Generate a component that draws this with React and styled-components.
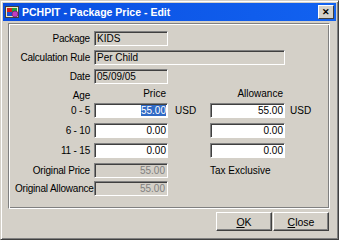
import React from "react";
import styled, { createGlobalStyle } from "styled-components";

const GlobalStyle = createGlobalStyle`
    html, body {
        margin: 0;
        padding: 0;
        background: #d4d0c8;
    }
    body {
        font-family: "Liberation Sans", Arial, sans-serif;
        font-size: 10px;
        color: #000000;
    }
`;

const rows = [
    { age: "0 - 5", price: "55.00", allowance: "55.00", selected: true, currency: true },
    { age: "6 - 10", price: "0.00", allowance: "0.00" },
    { age: "11 - 15", price: "0.00", allowance: "0.00" },
];

export default function App() {
    return (
        <>
            <GlobalStyle />
            <Window>
                <TitleBar>
                    <AppIcon />
                    <Title>PCHPIT - Package Price - Edit</Title>
                    <CloseBox>✕</CloseBox>
                </TitleBar>

                <Body>
                    <Group>
                        <Form>
                            <Label>Package</Label>
                            <Field width="74px">KIDS</Field>
                            <Spacer />

                            <Label>Calculation Rule</Label>
                            <Field width="191px" span>Per Child</Field>

                            <Label>Date</Label>
                            <Field width="74px">05/09/05</Field>
                            <Spacer />

                            <Label>Age</Label>
                            <Header>Price</Header>
                            <span />
                            <Header>Allowance</Header>
                            <span />

                            {rows.map(row => (
                                <React.Fragment key={row.age}>
                                    <Label>{row.age}</Label>
                                    <Input>
                                        {row.selected ? <Selected>{row.price}</Selected> : row.price}
                                    </Input>
                                    <Unit>{row.currency ? "USD" : ""}</Unit>
                                    <Input>{row.allowance}</Input>
                                    <Unit last>{row.currency ? "USD" : ""}</Unit>
                                </React.Fragment>
                            ))}

                            <Label>Original Price</Label>
                            <Field width="74px" align="right" muted>55.00</Field>
                            <span />
                            <Note>Tax Exclusive</Note>
                            <span />

                            <Label>Original Allowance</Label>
                            <Field width="74px" align="right" muted>55.00</Field>
                            <Spacer />
                        </Form>
                    </Group>

                    <Buttons>
                        <Button><u>O</u>K</Button>
                        <Button><u>C</u>lose</Button>
                    </Buttons>
                </Body>
            </Window>
        </>
    );
}

function AppIcon() {
    return (
        <svg width="15" height="14" viewBox="0 0 15 14">
            <rect x="0.5" y="1.5" width="13" height="11" fill="#f0e8c0" stroke="#404040" />
            <rect x="2" y="3" width="5" height="4" fill="#d82020" />
            <rect x="7" y="3" width="5" height="4" fill="#20a040" />
            <rect x="2" y="7" width="5" height="4" fill="#2050d0" />
            <rect x="7" y="7" width="5" height="4" fill="#e0c020" />
            <circle cx="10" cy="9" r="3" fill="#c040c0" stroke="#600060" strokeWidth="0.6" />
        </svg>
    );
}

const Window = styled.div`
    box-sizing: border-box;
    width: 339px;
    height: 240px;
    display: flex;
    flex-direction: column;
    background: #d4d0c8;
    border: 1px solid #404040;
    border-top-color: #d4d0c8;
    border-left-color: #d4d0c8;
    box-shadow: inset 1px 1px 0 #ffffff, inset -1px -1px 0 #808080;
    padding: 2px;
`;

const TitleBar = styled.div`
    height: 18px;
    display: flex;
    align-items: center;
    gap: 2px;
    padding: 0 2px;
    background: linear-gradient(90deg, #0a4ee0, #1262f0);
`;

const Title = styled.div`
    flex: 1;
    color: #ffffff;
    font-weight: bold;
    font-size: 10.5px;
`;

const CloseBox = styled.div`
    width: 16px;
    height: 14px;
    display: flex;
    align-items: center;
    justify-content: center;
    box-sizing: border-box;
    background: #d4d0c8;
    border: 1px solid #404040;
    border-top-color: #ffffff;
    border-left-color: #ffffff;
    font-size: 9px;
    font-weight: bold;
    color: #000000;
`;

const Body = styled.div`
    flex: 1;
    display: flex;
    flex-direction: column;
    padding: 2px 6px 4px 5px;
`;

const Group = styled.div`
    height: 186px;
    box-sizing: border-box;
    border: 1px solid #808080;
    border-right-color: #ffffff;
    border-bottom-color: #ffffff;
    box-shadow: inset 1px 1px 0 #ffffff, inset -1px -1px 0 #808080;
    padding: 7px 0 0 6px;
`;

const Form = styled.div`
    display: grid;
    grid-template-columns: 75px 74px 34px 75px 36px;
    grid-template-rows: 19px 19px 19px 15px 20px 20px 20px 18px 15px;
    column-gap: 4px;
    align-items: start;
`;

const Label = styled.div`
    height: 15px;
    line-height: 15px;
    text-align: right;
    white-space: nowrap;
    letter-spacing: -0.2px;
`;

const Header = styled.div`
    height: 15px;
    line-height: 11px;
    text-align: right;
    padding-right: 2px;
`;

const Spacer = styled.span`
    grid-column: span 3;
`;

const Field = styled.div`
    box-sizing: border-box;
    width: ${props => props.width};
    grid-column: ${props => (props.span ? "span 4" : "auto")};
    height: 15px;
    line-height: 13px;
    padding: 0 2px;
    text-align: ${props => props.align || "left"};
    color: ${props => (props.muted ? "#808080" : "#000000")};
    background: #d4d0c8;
    border: 1px solid #808080;
    border-right-color: #ffffff;
    border-bottom-color: #ffffff;
    box-shadow: inset 1px 1px 0 #404040;
`;

const Input = styled.div`
    box-sizing: border-box;
    height: 15px;
    line-height: 13px;
    padding: 0 1px;
    text-align: right;
    background: #ffffff;
    border: 1px solid #808080;
    border-right-color: #ffffff;
    border-bottom-color: #ffffff;
    box-shadow: inset 1px 1px 0 #404040;
`;

const Selected = styled.span`
    background: #316ac5;
    color: #ffffff;
`;

const Unit = styled.div`
    height: 15px;
    line-height: 15px;
    padding-left: ${props => (props.last ? "1px" : "3px")};
`;

const Note = styled.div`
    height: 15px;
    line-height: 15px;
    white-space: nowrap;
`;

const Buttons = styled.div`
    display: flex;
    justify-content: flex-end;
    gap: 1px;
    margin-top: 3px;
    padding-right: 1px;
`;

const Button = styled.button`
    width: 56px;
    height: 19px;
    padding: 0;
    font-family: "Liberation Sans", Arial, sans-serif;
    font-size: 10.5px;
    color: #000000;
    background: #d4d0c8;
    border: 1px solid #404040;
    border-top-color: #ffffff;
    border-left-color: #ffffff;
    box-shadow: inset -1px -1px 0 #808080;
`;
